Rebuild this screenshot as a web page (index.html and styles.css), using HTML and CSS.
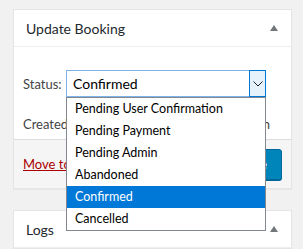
FILE: index.html
```html
<!DOCTYPE html>
<html lang="en">
<head>
    <meta charset="UTF-8">
    <meta name="viewport" content="width=device-width, initial-scale=1.0">
    <title>Update Booking</title>
    <link rel="stylesheet" href="styles.css">
</head>
<body>
    <div class="postbox">
        <div class="hndle">
            <span>Update Booking</span>
            <span class="toggle"></span>
        </div>
        <div class="inside">
            <div class="status-row">
                <label>Status:</label>
                <div class="select">
                    <span class="select-value">Confirmed</span>
                    <span class="select-btn">
                        <svg width="10" height="6" viewBox="0 0 10 6"><path d="M0.5 0.5 L5 5 L9.5 0.5" fill="none" stroke="#222" stroke-width="1"/></svg>
                    </span>
                    <ul class="options">
                        <li>Pending User Confirmation</li>
                        <li>Pending Payment</li>
                        <li>Pending Admin</li>
                        <li>Abandoned</li>
                        <li class="selected">Confirmed</li>
                        <li>Cancelled</li>
                    </ul>
                </div>
            </div>
            <p class="created"><span>Created:</span><span>12 May 2020 by admin</span></p>
        </div>
        <div class="major-actions">
            <a href="#" class="delete">Move to Trash</a>
            <button class="button-primary">Update</button>
        </div>
    </div>
    <div class="postbox logs">
        <div class="hndle">
            <span>Logs</span>
            <span class="toggle"></span>
        </div>
    </div>
</body>
</html>
```
FILE: styles.css
```css
body {
    margin: 0;
    padding: 9px 12px 0 13px;
    background: #f1f1f1;
    font-family: Lato, "Noto Sans", sans-serif;
    font-size: 13px;
    color: #444;
}
.postbox {
    width: 277px;
    background: #fff;
    border: 1px solid #e5e5e5;
    box-shadow: 0 1px 1px rgba(0, 0, 0, 0.04);
}
.logs {
    margin-top: 21px;
}
.hndle {
    height: 36px;
    padding: 0 12px;
    display: flex;
    align-items: center;
    justify-content: space-between;
    border-bottom: 1px solid #eee;
    font-size: 14px;
    color: #23282d;
}
.toggle {
    width: 0;
    height: 0;
    border-left: 4px solid transparent;
    border-right: 4px solid transparent;
    border-bottom: 6px solid #72777c;
    margin-right: 1px;
}
.inside {
    padding: 23px 9px 0 9px;
    height: 69px;
}
.status-row {
    display: flex;
    align-items: center;
}
.status-row label {
    width: 43px;
}
.select {
    position: relative;
    width: 198px;
    height: 25px;
    border: 1px solid #7eb4ea;
    display: flex;
    align-items: center;
    font-size: 14px;
    color: #000;
}
.select-value {
    flex: 1;
    padding-left: 6px;
}
.select-btn {
    width: 15px;
    height: 25px;
    margin: -1px -1px -1px 0;
    background: #e5f1fb;
    border: 1px solid #0078d7;
    display: flex;
    align-items: center;
    justify-content: center;
}
.options {
    position: absolute;
    top: 26px;
    left: -1px;
    width: 198px;
    margin: 0;
    padding: 0;
    list-style: none;
    background: #fff;
    border: 1px solid #828790;
    z-index: 2;
}
.options li {
    height: 22px;
    line-height: 22px;
    padding-left: 8px;
    font-size: 12.5px;
    color: #000;
}
.options .selected {
    background: #0078d7;
    color: #fff;
}
.created {
    margin: 19px 12px 0 0;
    display: flex;
    justify-content: space-between;
}
.major-actions {
    height: 48px;
    padding: 0 9px 0 9px;
    background: #f5f5f5;
    border-top: 1px solid #ddd;
    display: flex;
    align-items: center;
    justify-content: space-between;
}
.delete {
    color: #a00;
    text-decoration: underline;
}
.button-primary {
    height: 31px;
    padding: 0 14px;
    background: #0085ba;
    border: 1px solid #006799;
    border-radius: 3px;
    color: #fff;
    font-family: inherit;
    font-size: 13px;
    box-shadow: 0 1px 0 #006799;
}
```
